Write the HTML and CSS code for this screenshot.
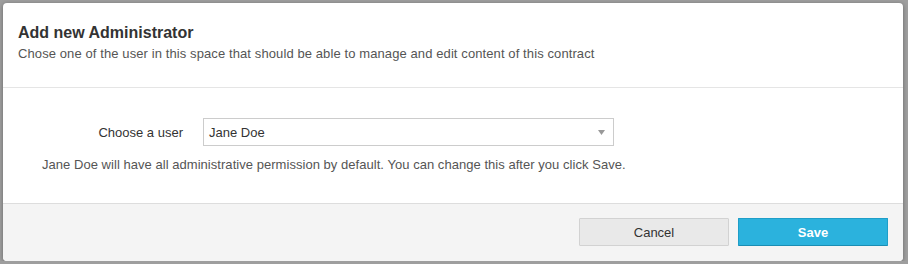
FILE: index.html
```html
<!DOCTYPE html>
<html lang="en">
<head>
    <meta charset="UTF-8">
    <meta name="viewport" content="width=device-width, initial-scale=1.0">
    <title>Add new Administrator</title>
    <link rel="stylesheet" href="styles.css">
</head>
<body>
    <div class="modal">
        <div class="modal-header">
            <h3 class="modal-title">Add new Administrator</h3>
            <p class="modal-subtitle">Chose one of the user in this space that should be able to manage and edit content of this contract</p>
        </div>

        <div class="modal-body">
            <div class="form-row">
                <label class="form-label">Choose a user</label>
                <div class="select-box">
                    <span class="select-value">Jane Doe</span>
                    <svg class="select-arrow" width="7" height="5" viewBox="0 0 7 5">
                        <path d="M0 0 L7 0 L3.5 5 Z" fill="#999"/>
                    </svg>
                </div>
            </div>
            <p class="form-help">Jane Doe will have all administrative permission by default. You can change this after you click Save.</p>
        </div>

        <div class="modal-footer">
            <button class="btn btn-default">Cancel</button>
            <button class="btn btn-primary">Save</button>
        </div>
    </div>
</body>
</html>
```

FILE: styles.css
```css
:root {
    --overlay: #9e9e9e;
    --text-dark: #333333;
    --text-muted: #555555;
    --line: #e5e5e5;
    --footer-bg: #f4f4f4;
    --accent: #2bb2dd;
    --accent-border: #1f9ec8;
}

* {
    box-sizing: border-box;
}

body {
    margin: 0;
    padding: 3px 5px 0 3px;
    background-color: var(--overlay);
    font-family: 'Liberation Sans', Arial, sans-serif;
    font-size: 13px;
    color: var(--text-dark);
}

.modal {
    width: 900px;
    background-color: #fff;
    border-radius: 4px;
    box-shadow: 0 1px 4px rgba(0, 0, 0, 0.35);
    overflow: hidden;
}

.modal-header {
    padding: 20px 15px 25px;
    border-bottom: 1px solid var(--line);
}

.modal-title {
    margin: 0;
    font-size: 16px;
    line-height: 20px;
    font-weight: bold;
    color: var(--text-dark);
}

.modal-subtitle {
    margin: 2px 0 0;
    line-height: 17px;
    letter-spacing: 0.1px;
    color: var(--text-muted);
}

.modal-body {
    padding: 30px 39px 29px;
}

.form-row {
    display: flex;
    align-items: center;
    gap: 20px;
}

.form-label {
    width: 141px;
    text-align: right;
    color: var(--text-dark);
}

.select-box {
    width: 411px;
    height: 28px;
    display: flex;
    align-items: center;
    justify-content: space-between;
    padding: 0 8px 0 5px;
    border: 1px solid #cccccc;
    background-color: #fff;
    color: var(--text-dark);
}

.form-help {
    margin: 10px 0 0;
    line-height: 18px;
    letter-spacing: 0.04px;
    color: var(--text-muted);
}

.modal-footer {
    display: flex;
    justify-content: flex-end;
    gap: 9px;
    padding: 14px 15px 15px;
    border-top: 1px solid #dddddd;
    background-color: var(--footer-bg);
}

.btn {
    width: 150px;
    height: 28px;
    font-family: inherit;
    font-size: 13px;
    border-radius: 1px;
    cursor: pointer;
}

.btn-default {
    background-color: #e9e9e9;
    border: 1px solid #d2d2d2;
    color: var(--text-dark);
}

.btn-primary {
    background-color: var(--accent);
    border: 1px solid var(--accent-border);
    border-bottom-color: #1a8db3;
    color: #fff;
    font-weight: bold;
}
```
